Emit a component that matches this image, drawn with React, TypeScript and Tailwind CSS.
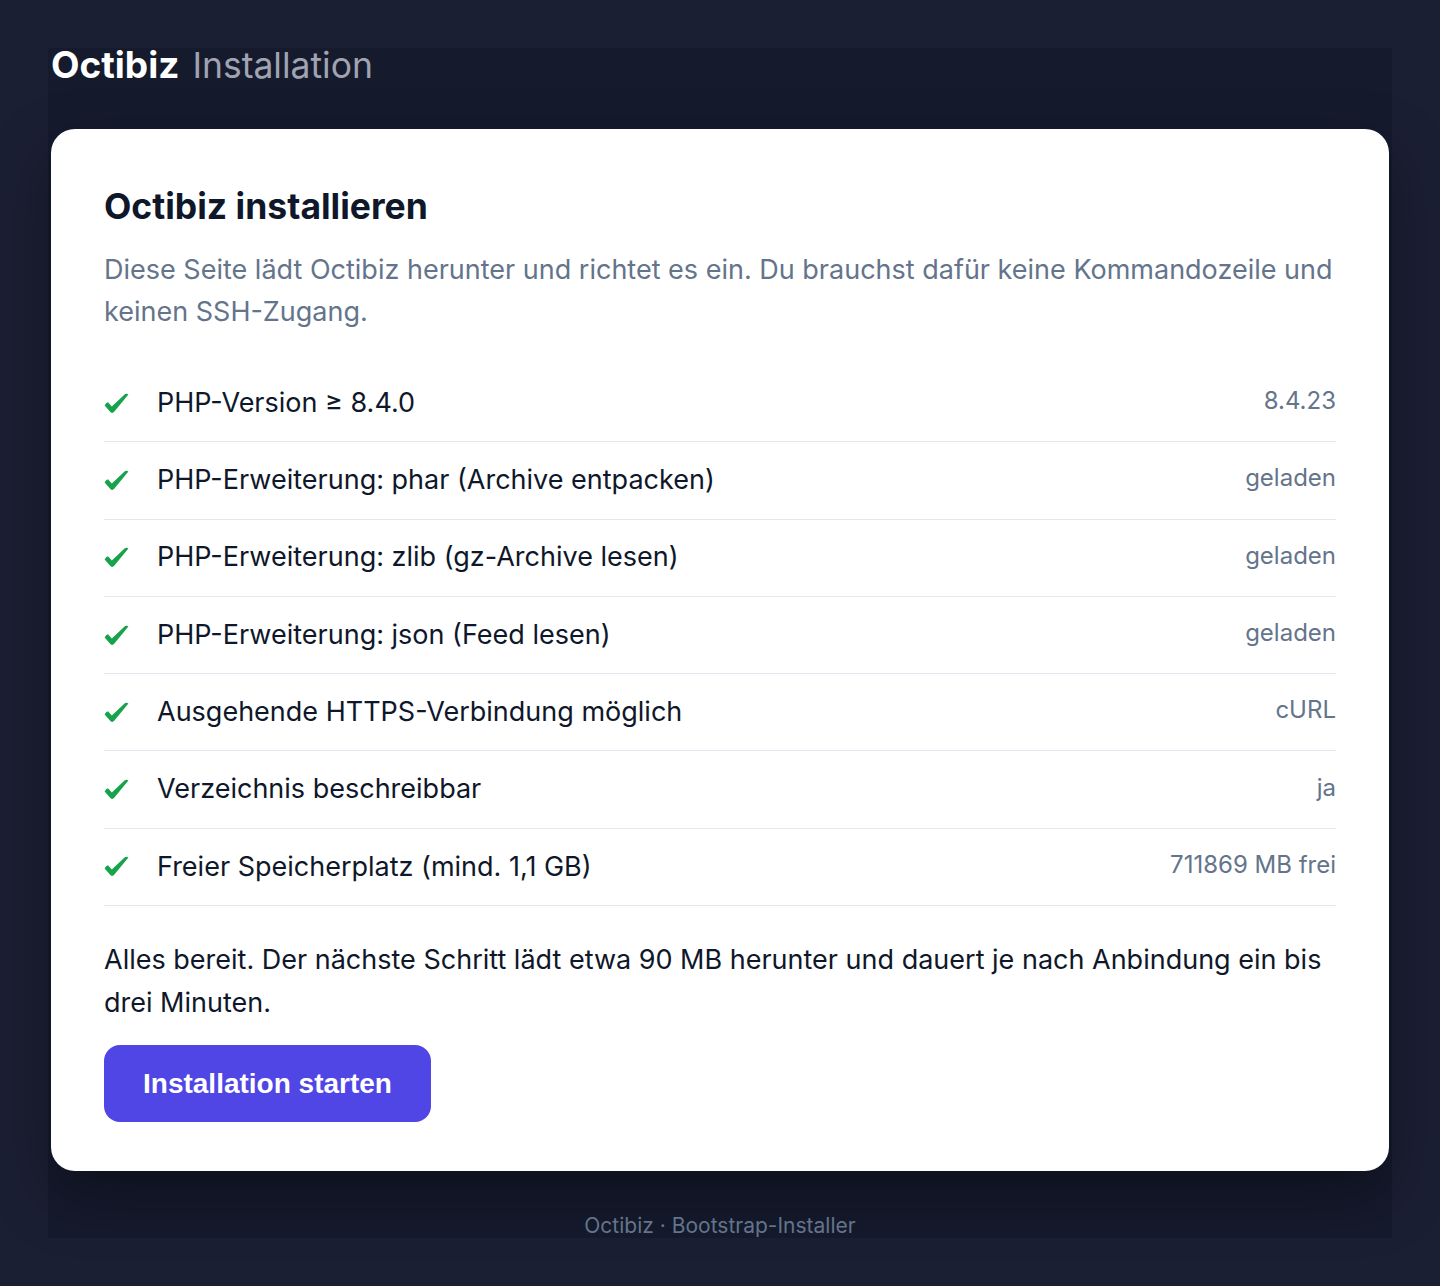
import React from "react";

const rows: { label: string; value: string }[] = [
  { label: "PHP-Version ≥ 8.4.0", value: "8.4.23" },
  { label: "PHP-Erweiterung: phar (Archive entpacken)", value: "geladen" },
  { label: "PHP-Erweiterung: zlib (gz-Archive lesen)", value: "geladen" },
  { label: "PHP-Erweiterung: json (Feed lesen)", value: "geladen" },
  { label: "Ausgehende HTTPS-Verbindung möglich", value: "cURL" },
  { label: "Verzeichnis beschreibbar", value: "ja" },
  { label: "Freier Speicherplatz (mind. 1,1 GB)", value: "711869 MB frei" },
];

function Check() {
  return (
    <svg width="25" height="21" viewBox="0 0 25 21" className="block">
      <path
        d="M0.6 12.4 Q2 9.6 4 9.2 L7.8 13.6 L20.8 1.2 Q23 0.2 24.4 1.6 L10.2 18.8 Q8.4 20.9 6.6 19.2 Z"
        fill="#16a34a"
      />
    </svg>
  );
}

export default function App() {
  return (
    <div
      className="min-h-screen bg-[#1b1f33] p-12"
      style={{ fontFamily: "Inter, 'Noto Sans', sans-serif" }}
    >
      <div className="bg-[#151a2d] px-[3px]">
        <h1 className="flex items-baseline gap-[13px] leading-[33px]">
          <span className="text-[37px] font-bold text-white">Octibiz</span>
          <span className="text-[35.5px] font-normal text-[#a0a3b1]">Installation</span>
        </h1>
        <div className="mt-[47px] rounded-[24px] bg-white px-[53px] pt-[56px] pb-[49px] shadow-[0_24px_60px_rgba(0,0,0,0.35)]">
          <h2 className="text-[35.5px] font-bold leading-[44px] text-[#0f172a]">
            Octibiz installieren
          </h2>
          <p className="mt-[20px] text-[27px] leading-[42px] text-[#64748b]">
            Diese Seite lädt Octibiz herunter und richtet es ein. Du brauchst dafür keine Kommandozeile und keinen SSH-Zugang.
          </p>
          <ul className="mt-[32px]">
            {rows.map((r) => (
              <li
                key={r.label}
                className="flex h-[77.3px] items-center border-b border-[#e2e8f0]"
              >
                <span className="w-[53px]">
                  <Check />
                </span>
                <span className="flex-1 text-[27px] text-[#0f172a]">{r.label}</span>
                <span className="-mt-[4px] text-[24px] text-[#64748b]">{r.value}</span>
              </li>
            ))}
          </ul>
          <p className="mt-[32px] text-[27px] leading-[43px] text-[#0f172a]">
            Alles bereit. Der nächste Schritt lädt etwa 90 MB herunter und dauert je nach Anbindung ein bis drei Minuten.
          </p>
          <button
            className="mt-[21px] h-[77px] rounded-[16px] bg-[#4f46e5] px-[39px] text-[28px] font-bold text-white"
            style={{ fontFamily: "'Liberation Sans', Arial, sans-serif" }}
          >
            Installation starten
          </button>
        </div>
        <footer className="pt-[43px] text-center text-[21px] leading-[24px] text-[#64748b]">
          Octibiz · Bootstrap-Installer
        </footer>
      </div>
    </div>
  );
}
